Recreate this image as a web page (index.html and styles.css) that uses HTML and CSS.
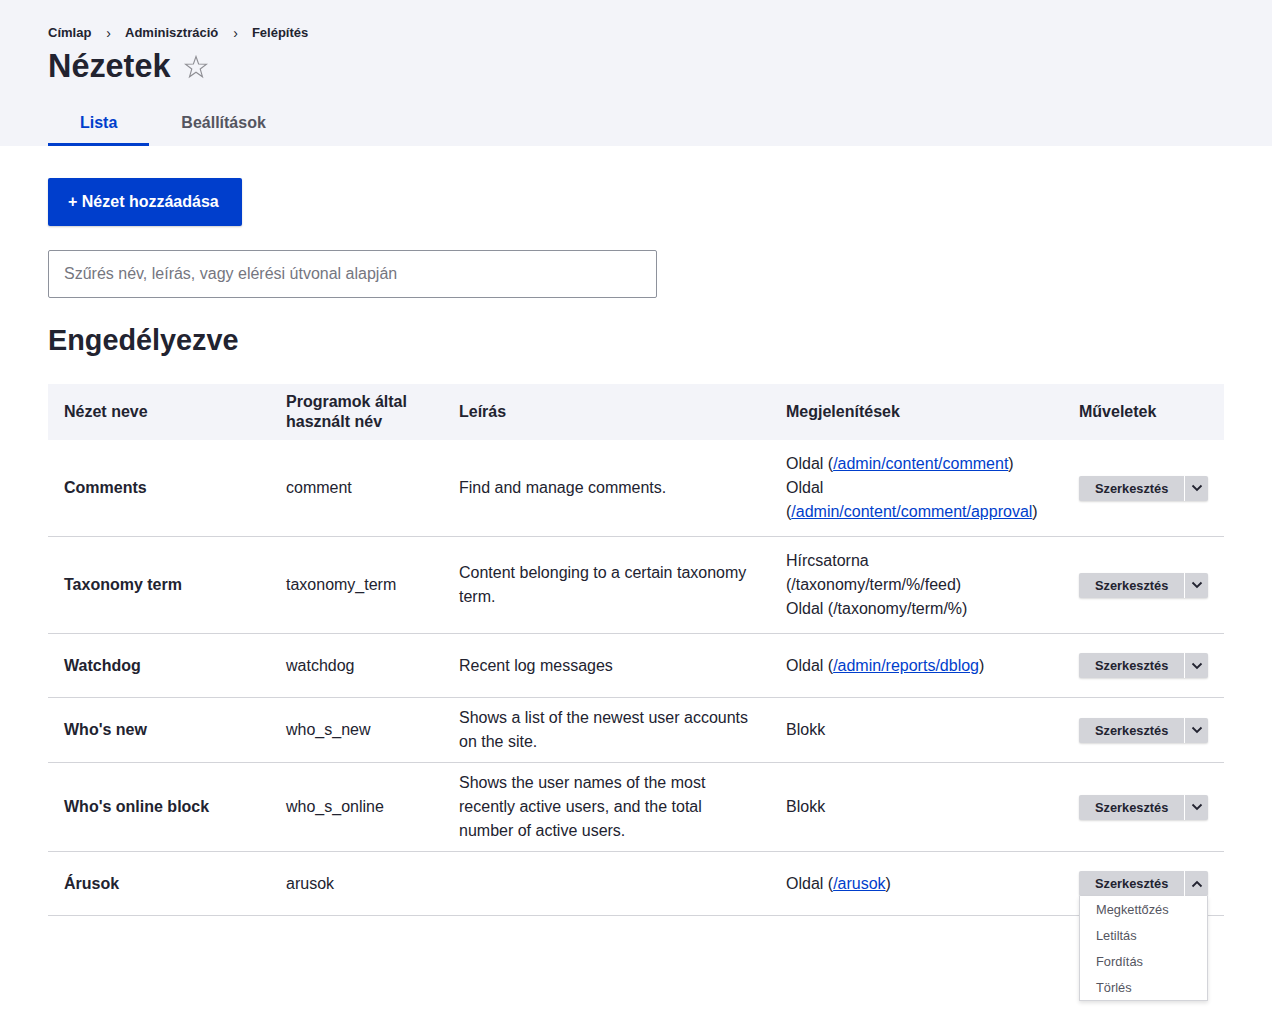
FILE: index.html
```html
<!DOCTYPE html>
<html lang="hu">
<head>
<meta charset="utf-8">
<title>Nézetek</title>
<link rel="stylesheet" href="styles.css">
</head>
<body>
<header class="page-header">
  <nav class="breadcrumb">
    <a href="#">Címlap</a><span class="sep">›</span><a href="#">Adminisztráció</a><span class="sep">›</span><a href="#">Felépítés</a>
  </nav>
  <div class="title-row">
    <h1 class="page-title">Nézetek</h1>
    <svg class="star" width="24" height="24" viewBox="0 0 24 24"><polygon points="12,1.5 14.6,9 22.5,9.2 16.2,14 18.5,21.8 12,17.2 5.5,21.8 7.8,14 1.5,9.2 9.4,9" fill="none" stroke="#8e8e94" stroke-width="1.1" stroke-linejoin="miter"/></svg>
  </div>
  <nav class="tabs">
    <a class="tab active" href="#">Lista</a>
    <a class="tab" href="#">Beállítások</a>
  </nav>
</header>

<main class="content">
  <a class="primary-btn" href="#">+ Nézet hozzáadása</a>
  <input class="filter" type="text" placeholder="Szűrés név, leírás, vagy elérési útvonal alapján">
  <h2 class="section-title">Engedélyezve</h2>

  <table class="views-table">
    <colgroup>
      <col class="c1"><col class="c2"><col class="c3"><col class="c4"><col class="c5">
    </colgroup>
    <thead>
      <tr>
        <th>Nézet neve</th>
        <th>Programok által használt név</th>
        <th>Leírás</th>
        <th>Megjelenítések</th>
        <th>Műveletek</th>
      </tr>
    </thead>
    <tbody>
      <tr>
        <td class="name">Comments</td>
        <td>comment</td>
        <td>Find and manage comments.</td>
        <td><ul class="displays"><li>Oldal (<a href="#">/admin/content/comment</a>)</li><li>Oldal (<a href="#">/admin/content/comment/approval</a>)</li></ul></td>
        <td><div class="dropbutton"><span class="db-main">Szerkesztés</span><span class="db-toggle"><svg width="12" height="8" viewBox="0 0 12 8"><polyline points="1.5,1.5 6,6 10.5,1.5" fill="none" stroke="#222330" stroke-width="1.8"/></svg></span></div></td>
      </tr>
      <tr>
        <td class="name">Taxonomy term</td>
        <td>taxonomy_term</td>
        <td>Content belonging to a certain taxonomy term.</td>
        <td><ul class="displays"><li>Hírcsatorna (/taxonomy/term/%/feed)</li><li>Oldal (/taxonomy/term/%)</li></ul></td>
        <td><div class="dropbutton"><span class="db-main">Szerkesztés</span><span class="db-toggle"><svg width="12" height="8" viewBox="0 0 12 8"><polyline points="1.5,1.5 6,6 10.5,1.5" fill="none" stroke="#222330" stroke-width="1.8"/></svg></span></div></td>
      </tr>
      <tr>
        <td class="name">Watchdog</td>
        <td>watchdog</td>
        <td>Recent log messages</td>
        <td>Oldal (<a href="#">/admin/reports/dblog</a>)</td>
        <td><div class="dropbutton"><span class="db-main">Szerkesztés</span><span class="db-toggle"><svg width="12" height="8" viewBox="0 0 12 8"><polyline points="1.5,1.5 6,6 10.5,1.5" fill="none" stroke="#222330" stroke-width="1.8"/></svg></span></div></td>
      </tr>
      <tr>
        <td class="name">Who's new</td>
        <td>who_s_new</td>
        <td>Shows a list of the newest user accounts on the site.</td>
        <td>Blokk</td>
        <td><div class="dropbutton"><span class="db-main">Szerkesztés</span><span class="db-toggle"><svg width="12" height="8" viewBox="0 0 12 8"><polyline points="1.5,1.5 6,6 10.5,1.5" fill="none" stroke="#222330" stroke-width="1.8"/></svg></span></div></td>
      </tr>
      <tr>
        <td class="name">Who's online block</td>
        <td>who_s_online</td>
        <td>Shows the user names of the most recently active users, and the total number of active users.</td>
        <td>Blokk</td>
        <td><div class="dropbutton"><span class="db-main">Szerkesztés</span><span class="db-toggle"><svg width="12" height="8" viewBox="0 0 12 8"><polyline points="1.5,1.5 6,6 10.5,1.5" fill="none" stroke="#222330" stroke-width="1.8"/></svg></span></div></td>
      </tr>
      <tr>
        <td class="name">Árusok</td>
        <td>arusok</td>
        <td></td>
        <td>Oldal (<a href="#">/arusok</a>)</td>
        <td>
          <div class="dropbutton open"><span class="db-main">Szerkesztés</span><span class="db-toggle"><svg width="12" height="8" viewBox="0 0 12 8"><polyline points="1.5,6.5 6,2 10.5,6.5" fill="none" stroke="#222330" stroke-width="1.8"/></svg></span>
            <ul class="db-menu">
              <li>Megkettőzés</li>
              <li>Letiltás</li>
              <li>Fordítás</li>
              <li>Törlés</li>
            </ul>
          </div>
        </td>
      </tr>
    </tbody>
  </table>
</main>
</body>
</html>
```

FILE: styles.css
```css
html, body {
  margin: 0;
  padding: 0;
  background: #fff;
}
body {
  font-family: "Liberation Sans", Arial, sans-serif;
  color: #222330;
  font-size: 16px;
  line-height: 24px;
  min-height: 1013px;
}
a { color: #003ecc; }

.page-header {
  background: #f3f4f9;
  padding: 25px 48px 0;
}
.breadcrumb {
  font-size: 13px;
  line-height: 16px;
  height: 16px;
  font-weight: bold;
}
.breadcrumb a {
  color: #222330;
  text-decoration: none;
}
.breadcrumb .sep {
  display: inline-block;
  margin: 0 14px 0 15px;
  font-size: 14px;
  line-height: 16px;
  vertical-align: top;
  font-weight: normal;
}
.title-row {
  display: flex;
  align-items: center;
  gap: 14px;
  margin-top: 5px;
  height: 40px;
}
.page-title {
  margin: 0;
  font-size: 32.4px;
  line-height: 40px;
  font-weight: bold;
}
.star { display: block; margin-top: 1px; }

.tabs {
  display: flex;
  margin-top: 12px;
}
.tab {
  display: block;
  padding: 2px 32px 0;
  height: 48px;
  line-height: 45px;
  font-weight: bold;
  color: #545560;
  text-decoration: none;
  box-sizing: border-box;
}
.tab.active {
  color: #003ecc;
  border-bottom: 3px solid #003ecc;
}

.content {
  padding: 32px 48px 120px;
}
.primary-btn {
  display: inline-block;
  height: 48px;
  line-height: 48px;
  padding: 0 23px 0 20px;
  background: #003ecc;
  color: #fff;
  font-weight: bold;
  text-decoration: none;
  border-radius: 2px;
  box-shadow: 0 1px 2px rgba(0,0,0,0.2);
}
.filter {
  display: block;
  box-sizing: border-box;
  width: 609px;
  height: 48px;
  margin-top: 24px;
  padding: 0 15px;
  border: 1px solid #8e929c;
  border-radius: 2px;
  font-family: inherit;
  font-size: 16px;
  color: #222330;
}
.filter::placeholder { color: #75767f; }

.section-title {
  margin: 24px 0 26px;
  font-size: 28.8px;
  line-height: 36px;
  font-weight: bold;
}

.views-table {
  width: 1176px;
  border-collapse: collapse;
  table-layout: fixed;
}
.c1 { width: 222px; }
.c2 { width: 173px; }
.c3 { width: 327px; }
.c4 { width: 293px; }
.c5 { width: 161px; }

.views-table th {
  background: #f3f4f9;
  text-align: left;
  font-weight: bold;
  line-height: 20px;
  padding: 8px 16px;
  height: 40px;
  vertical-align: middle;
}
.views-table td {
  padding: 8px 16px;
  border-bottom: 1px solid #d3d4d9;
  vertical-align: middle;
}
.views-table tbody tr { height: 64px; }
.views-table td.name { font-weight: bold; }

.displays {
  list-style: none;
  margin: 4px 0;
  padding: 0;
}

.dropbutton {
  position: relative;
  display: inline-flex;
  height: 25px;
  background: #d3d4d9;
  border-radius: 2px;
  box-shadow: 0 1px 2px rgba(0,0,0,0.15);
  font-size: 12.8px;
  line-height: 25px;
  font-weight: bold;
  vertical-align: middle;
}
.db-main {
  display: block;
  padding: 0 17px 0 16px;
  width: 72px;
  border-right: 1px solid #fff;
  color: #222330;
}
.db-toggle {
  display: flex;
  align-items: center;
  justify-content: center;
  width: 23px;
}
.db-toggle svg { display: block; }
.db-menu {
  position: absolute;
  top: 25px;
  left: 0;
  width: 127px;
  margin: 0;
  padding: 0;
  list-style: none;
  background: #fff;
  border: 1px solid #d3d4d9;
  border-top: 0;
  box-shadow: 0 2px 4px rgba(0,0,0,0.12);
  font-weight: normal;
}
.db-menu li {
  height: 26px;
  line-height: 27px;
  padding-left: 16px;
  color: #545560;
}
```
